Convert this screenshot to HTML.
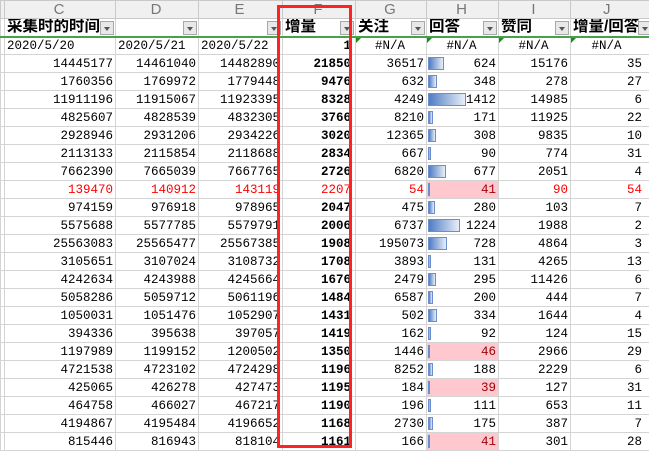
<!DOCTYPE html>
<html><head><meta charset="utf-8">
<style>
*{margin:0;padding:0;box-sizing:border-box}
body{width:649px;height:450px;overflow:hidden;background:#fff;position:relative;font-family:"Liberation Mono","Noto Sans CJK SC",monospace}
table{border-collapse:collapse;table-layout:fixed;position:absolute;left:0;top:0;width:660px}
td{height:18px;border:1px solid #d4d4d4;font-size:12.5px;text-align:right;padding:0 2px 0 0;white-space:nowrap;overflow:hidden;line-height:16px;color:#000;position:relative}
tr.ch td{background:#f0f0f0;color:#777;text-align:center;font-family:"Liberation Sans",sans-serif;font-size:15px;border-color:#c9c9c9;height:18px}
tr.hd td{font-family:"Liberation Sans","Noto Sans CJK SC",sans-serif;font-weight:bold;font-size:15.5px;text-align:left;padding-left:2px;border-bottom:2px solid #4aa04a}
.dd{position:absolute;right:1px;top:2px;width:14px;height:14px;border:1px solid #a8a8a8;background:#e8e8e8}
.dd:after{content:"";position:absolute;left:3px;top:5px;border-left:3.5px solid transparent;border-right:3.5px solid transparent;border-top:4px solid #555}
td.f{font-weight:bold;padding-right:4px}
tr.r td{color:#f00}
td.p{background:#ffc7ce;color:#9c0006!important}
td.na{text-align:center}
.tri:before{content:"";position:absolute;left:0;top:0;border-top:5px solid #1a8a1a;border-right:5px solid transparent}
.b{position:absolute;left:1px;top:2px;height:13px;border:1px solid #6a8fcc;background:linear-gradient(to right,#4f7dc4,#e8eef8)}
td.j{padding-right:18px}
#box{position:absolute;left:277px;top:5px;width:75px;height:443px;border:3px solid #f22;}
</style></head><body>
<table>
<colgroup><col style="width:4px"><col style="width:111px"><col style="width:83px"><col style="width:84px"><col style="width:73px"><col style="width:71px"><col style="width:72px"><col style="width:72px"><col style="width:90px"></colgroup>
<tr class="ch"><td></td><td>C</td><td>D</td><td>E</td><td>F</td><td>G</td><td>H</td><td>I</td><td style="text-align:left;padding-left:32px">J</td></tr>
<tr class="hd"><td></td><td>采集时的时间<span class="dd"></span></td><td><span class="dd"></span></td><td><span class="dd"></span></td><td>增量<span class="dd"></span></td><td>关注<span class="dd"></span></td><td>回答<span class="dd"></span></td><td>赞同<span class="dd"></span></td><td>增量/回答<span class="dd" style="right:8px"></span></td></tr>
<tr><td></td><td style="text-align:left;padding-left:2px">2020/5/20</td><td style="text-align:left;padding-left:2px">2020/5/21</td><td style="text-align:left;padding-left:2px">2020/5/22</td><td class="f">1</td><td class="na tri">#N/A</td><td class="na tri">#N/A</td><td class="na tri">#N/A</td><td class="na tri" style="padding-right:18px">#N/A</td></tr>
<tr><td></td><td>14445177</td><td>14461040</td><td>14482890</td><td class="f">21850</td><td>36517</td><td><i class="b" style="width:16px"></i>624</td><td>15176</td><td class="j">35</td></tr>
<tr><td></td><td>1760356</td><td>1769972</td><td>1779448</td><td class="f">9476</td><td>632</td><td><i class="b" style="width:9px"></i>348</td><td>278</td><td class="j">27</td></tr>
<tr><td></td><td>11911196</td><td>11915067</td><td>11923395</td><td class="f">8328</td><td>4249</td><td><i class="b" style="width:38px"></i>1412</td><td>14985</td><td class="j">6</td></tr>
<tr><td></td><td>4825607</td><td>4828539</td><td>4832305</td><td class="f">3766</td><td>8210</td><td><i class="b" style="width:5px"></i>171</td><td>11925</td><td class="j">22</td></tr>
<tr><td></td><td>2928946</td><td>2931206</td><td>2934226</td><td class="f">3020</td><td>12365</td><td><i class="b" style="width:8px"></i>308</td><td>9835</td><td class="j">10</td></tr>
<tr><td></td><td>2113133</td><td>2115854</td><td>2118688</td><td class="f">2834</td><td>667</td><td><i class="b" style="width:3px"></i>90</td><td>774</td><td class="j">31</td></tr>
<tr><td></td><td>7662390</td><td>7665039</td><td>7667765</td><td class="f">2726</td><td>6820</td><td><i class="b" style="width:18px"></i>677</td><td>2051</td><td class="j">4</td></tr>
<tr class="r"><td></td><td>139470</td><td>140912</td><td>143119</td><td style="padding-right:4px">2207</td><td>54</td><td class="p"><i class="b" style="width:2px"></i>41</td><td>90</td><td class="j">54</td></tr>
<tr><td></td><td>974159</td><td>976918</td><td>978965</td><td class="f">2047</td><td>475</td><td><i class="b" style="width:7px"></i>280</td><td>103</td><td class="j">7</td></tr>
<tr><td></td><td>5575688</td><td>5577785</td><td>5579791</td><td class="f">2006</td><td>6737</td><td><i class="b" style="width:32px"></i>1224</td><td>1988</td><td class="j">2</td></tr>
<tr><td></td><td>25563083</td><td>25565477</td><td>25567385</td><td class="f">1908</td><td>195073</td><td><i class="b" style="width:19px"></i>728</td><td>4864</td><td class="j">3</td></tr>
<tr><td></td><td>3105651</td><td>3107024</td><td>3108732</td><td class="f">1708</td><td>3893</td><td><i class="b" style="width:3px"></i>131</td><td>4265</td><td class="j">13</td></tr>
<tr><td></td><td>4242634</td><td>4243988</td><td>4245664</td><td class="f">1676</td><td>2479</td><td><i class="b" style="width:8px"></i>295</td><td>11426</td><td class="j">6</td></tr>
<tr><td></td><td>5058286</td><td>5059712</td><td>5061196</td><td class="f">1484</td><td>6587</td><td><i class="b" style="width:5px"></i>200</td><td>444</td><td class="j">7</td></tr>
<tr><td></td><td>1050031</td><td>1051476</td><td>1052907</td><td class="f">1431</td><td>502</td><td><i class="b" style="width:9px"></i>334</td><td>1644</td><td class="j">4</td></tr>
<tr><td></td><td>394336</td><td>395638</td><td>397057</td><td class="f">1419</td><td>162</td><td><i class="b" style="width:3px"></i>92</td><td>124</td><td class="j">15</td></tr>
<tr><td></td><td>1197989</td><td>1199152</td><td>1200502</td><td class="f">1350</td><td>1446</td><td class="p"><i class="b" style="width:2px"></i>46</td><td>2966</td><td class="j">29</td></tr>
<tr><td></td><td>4721538</td><td>4723102</td><td>4724298</td><td class="f">1196</td><td>8252</td><td><i class="b" style="width:5px"></i>188</td><td>2229</td><td class="j">6</td></tr>
<tr><td></td><td>425065</td><td>426278</td><td>427473</td><td class="f">1195</td><td>184</td><td class="p"><i class="b" style="width:2px"></i>39</td><td>127</td><td class="j">31</td></tr>
<tr><td></td><td>464758</td><td>466027</td><td>467217</td><td class="f">1190</td><td>196</td><td><i class="b" style="width:3px"></i>111</td><td>653</td><td class="j">11</td></tr>
<tr><td></td><td>4194867</td><td>4195484</td><td>4196652</td><td class="f">1168</td><td>2730</td><td><i class="b" style="width:5px"></i>175</td><td>387</td><td class="j">7</td></tr>
<tr><td></td><td>815446</td><td>816943</td><td>818104</td><td class="f">1161</td><td>166</td><td class="p"><i class="b" style="width:2px"></i>41</td><td>301</td><td class="j">28</td></tr>
</table>
<div id="box"></div>
</body></html>
